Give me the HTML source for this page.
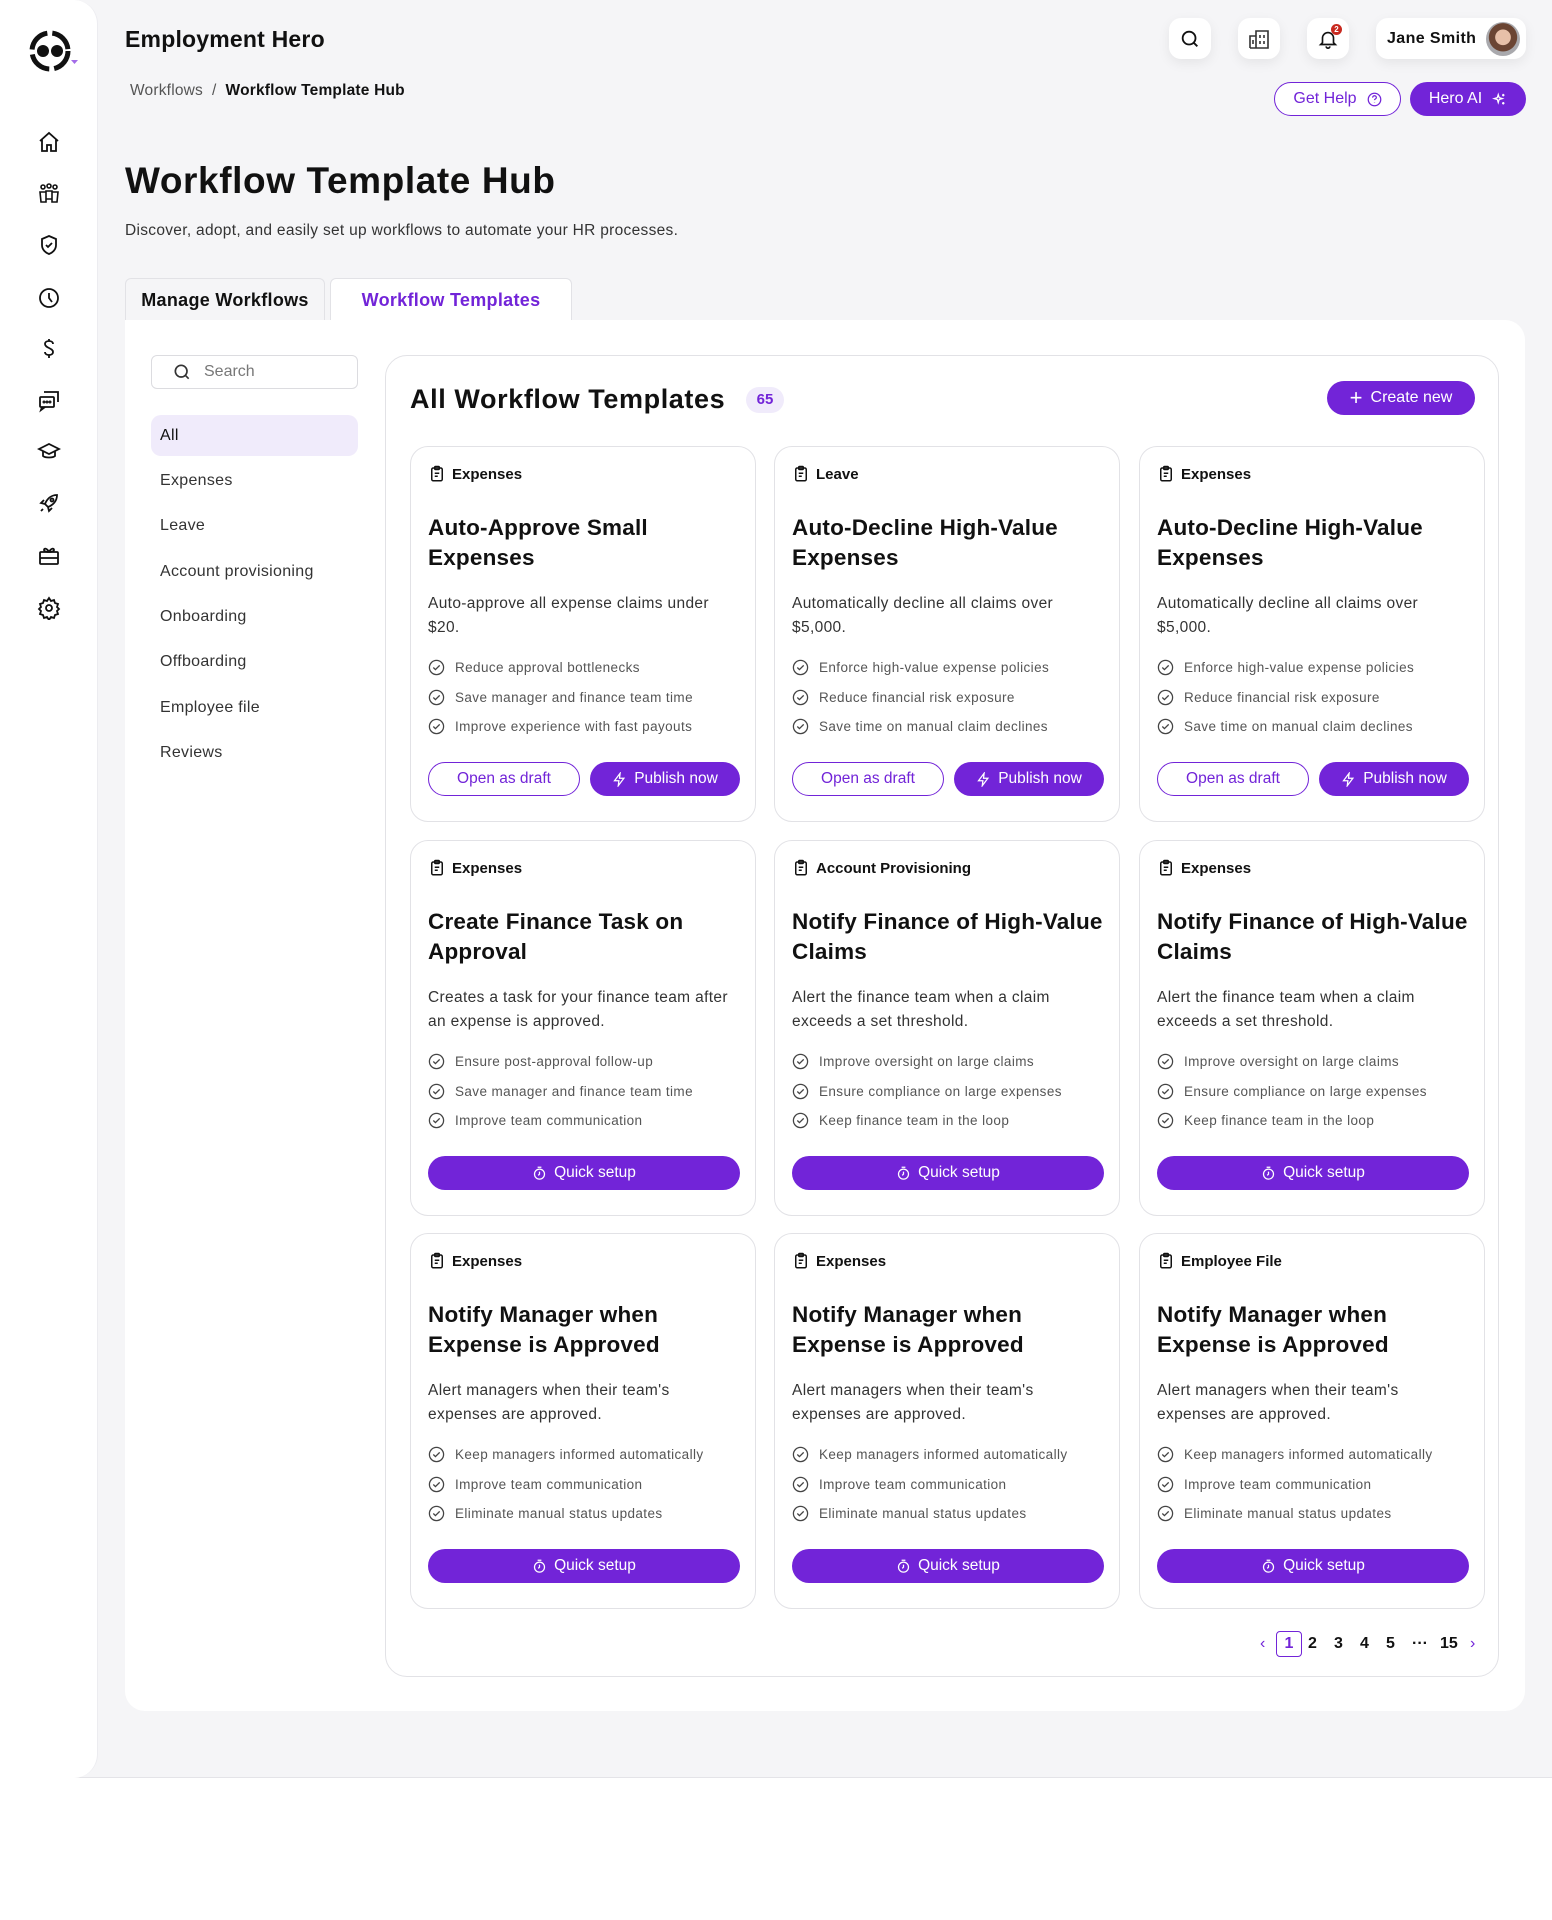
<!DOCTYPE html>
<html><head><meta charset="utf-8">
<style>
*{box-sizing:border-box;margin:0;padding:0}
body{width:1552px;height:1920px;background:#fff;font-family:"Liberation Sans",sans-serif;color:#111;position:relative;overflow:hidden}
.bg{position:absolute;left:0;top:0;width:1552px;height:1778px;background:#f5f5f7;border-bottom:1px solid #e4e4e8}
.side{position:absolute;left:0;top:0;width:98px;height:1778px;background:#fff;border-right:1px solid #ececf0;border-radius:0 24px 24px 0}
.ico{position:absolute;left:37px;width:24px;height:24px}
.abs{position:absolute}
.tb{position:absolute;top:18px;height:41px;background:#fff;border-radius:12px;box-shadow:0 4px 12px rgba(0,0,0,.07);display:flex;align-items:center;justify-content:center}
.pill{position:absolute;top:82px;height:34px;border-radius:17px;display:flex;align-items:center;justify-content:center;font-size:16px;gap:10px}
.purple{background:#7224d8;color:#fff}
.outline{border:1.5px solid #7224d8;color:#7224d8;background:#fff}
.tab{position:absolute;top:278px;height:43px;border:1px solid #e2e2e6;border-bottom:none;border-radius:6px 6px 0 0;display:flex;align-items:center;justify-content:center;font-size:18px;font-weight:bold;letter-spacing:.3px}
.panel{position:absolute;left:125px;top:320px;width:1400px;height:1391px;background:#fff;border-radius:0 20px 20px 20px}
.nav{position:absolute;left:151px;width:207px;height:41px;display:flex;align-items:center;padding-left:9px;font-size:16px;color:#333;letter-spacing:.3px}
.inner{position:absolute;left:385px;top:355px;width:1114px;height:1322px;border:1.5px solid #e2e2e6;border-radius:22px}
.card{position:absolute;width:346px;height:376px;border:1.5px solid #e2e2e6;border-radius:18px;background:#fff}
.cat{position:absolute;left:17px;top:18px;display:flex;align-items:center;gap:6px;font-size:15px;font-weight:bold}
.ct{position:absolute;left:17px;top:66px;width:320px;font-size:22.5px;font-weight:bold;line-height:30px;letter-spacing:.2px}
.cd{position:absolute;left:17px;top:145px;width:310px;font-size:15.5px;line-height:23.5px;color:#333;letter-spacing:.35px}
.bl{position:absolute;left:17px;top:206px;font-size:13.5px;color:#555;letter-spacing:.4px}
.bl div{height:29.4px;display:flex;align-items:center;gap:10px}
.btns{position:absolute;left:17px;top:315px;width:312px;height:34px;display:flex;gap:10px}
.btns div{flex:1;border-radius:17px;display:flex;align-items:center;justify-content:center;font-size:15.5px;gap:7px}
</style></head><body>
<div class="bg"></div>
<div class="side">
<svg class="abs" style="left:28px;top:28px" width="52" height="48" viewBox="0 0 52 48"><circle cx="22" cy="23" r="18" fill="none" stroke="#111" stroke-width="5" stroke-dasharray="24 5"/><circle cx="15" cy="23" r="6" fill="#111"/><circle cx="29" cy="23" r="6" fill="#111"/><path d="M43 32l7 0-3.5 4z" fill="#a36ce8"/></svg>
<svg class="ico" style="top:130px" viewBox="0 0 24 24" fill="none" stroke="#111" stroke-width="1.8"><path d="M3 11L12 3l9 8M5 9v12h5v-6h4v6h5V9"/></svg>
<svg class="ico" style="top:182px" viewBox="0 0 24 24" fill="none" stroke="#111" stroke-width="1.6"><circle cx="6" cy="5" r="2"/><circle cx="12" cy="4" r="2"/><circle cx="18" cy="5" r="2"/><path d="M3 10h6v10H4zM15 10h6l-1 10h-5zM9 9h6v8h-6z"/></svg>
<svg class="ico" style="top:233px" viewBox="0 0 24 24" fill="none" stroke="#111" stroke-width="1.8"><path d="M12 3l7 3v6c0 5-4 8-7 9-3-1-7-4-7-9V6z"/><path d="M9 12l2 2 4-4"/></svg>
<svg class="ico" style="top:286px" viewBox="0 0 24 24" fill="none" stroke="#111" stroke-width="1.8"><circle cx="12" cy="12" r="9"/><path d="M12 7v5l3 4"/></svg>
<svg class="ico" style="top:337px" viewBox="0 0 24 24" fill="none" stroke="#111" stroke-width="1.8"><path d="M16 7c0-2-2-3-4-3s-4 1-4 3 2 3 4 4 4 2 4 4-2 3-4 3-4-1-4-3M12 2v2M12 18v3"/></svg>
<svg class="ico" style="top:389px" viewBox="0 0 24 24" fill="none" stroke="#111" stroke-width="1.8"><rect x="3" y="8" width="14" height="10" rx="1"/><path d="M7 3h14v10M5 18l-1 3 4-3"/><circle cx="7" cy="13" r=".6"/><circle cx="10" cy="13" r=".6"/><circle cx="13" cy="13" r=".6"/></svg>
<svg class="ico" style="top:440px" viewBox="0 0 24 24" fill="none" stroke="#111" stroke-width="1.8"><path d="M2 9l10-5 10 5-10 5zM6 11v5c2 2 10 2 12 0v-5"/></svg>
<svg class="ico" style="top:491px" viewBox="0 0 24 24" fill="none" stroke="#111" stroke-width="1.8"><path d="M20 4c-6 0-10 4-12 9l3 3c5-2 9-6 9-12zM8 13l-4-1 3-3M11 16l1 4 3-3M6 18l-2 2"/><circle cx="15" cy="9" r="1.5"/></svg>
<svg class="ico" style="top:544px" viewBox="0 0 24 24" fill="none" stroke="#111" stroke-width="1.8"><rect x="3" y="8" width="18" height="12" rx="1"/><path d="M3 14h18M12 8c-2-4-5-4-5-2s5 2 5 2c0 0 5 0 5-2s-3-2-5 2"/></svg>
<svg class="ico" style="top:596px" viewBox="0 0 24 24" fill="none" stroke="#111" stroke-width="1.8"><circle cx="12" cy="12" r="3"/><path d="M12 2l2 3 3-1 1 3 3 1-1 3 2 2-2 2 1 3-3 1-1 3-3-1-2 3-2-3-3 1-1-3-3-1 1-3-2-2 2-2-1-3 3-1 1-3 3 1z"/></svg>
</div>

<div class="abs" style="left:125px;top:26px;font-size:23px;font-weight:bold;letter-spacing:.2px">Employment Hero</div>
<div class="abs" style="left:130px;top:82px;font-size:15.5px;color:#555;letter-spacing:.2px">Workflows &nbsp;/&nbsp; <span style="color:#111;font-weight:bold">Workflow Template Hub</span></div>

<div class="tb" style="left:1169px;width:42px"><svg width="22" height="22" viewBox="0 0 24 24" fill="none" stroke="#111" stroke-width="2"><circle cx="11" cy="11" r="7"/><path d="M16 16l4 4"/></svg></div>
<div class="tb" style="left:1238px;width:42px"><svg width="24" height="24" viewBox="0 0 24 24" fill="none" stroke="#333" stroke-width="1.6"><path d="M3 21V9h6v12M9 21V4h12v17zM3 21h18M13 8v3M17 8v3M13 14v3M17 14v3M6 13v4"/></svg></div>
<div class="tb" style="left:1307px;width:42px"><svg width="22" height="22" viewBox="0 0 24 24" fill="none" stroke="#111" stroke-width="1.8"><path d="M6 16V11a6 6 0 0112 0v5l2 2H4zM10 20a2 2 0 004 0"/></svg><div class="abs" style="right:7px;top:6px;width:11px;height:11px;border-radius:50%;background:#c8291f;color:#fff;font-size:8px;text-align:center;line-height:11px;font-weight:bold">2</div></div>
<div class="tb" style="left:1376px;width:150px;justify-content:flex-start;padding-left:11px;gap:10px"><span style="font-size:16px;font-weight:bold;letter-spacing:.4px">Jane Smith</span><div style="width:34px;height:34px;border-radius:50%;background:radial-gradient(circle at 50% 45%,#e7c0a8 0 30%,#6b4533 32% 55%,#a9a9ad 57%)"></div></div>

<div class="pill outline" style="left:1274px;width:127px">Get Help <svg width="15" height="15" viewBox="0 0 24 24" fill="none" stroke="#7224d8" stroke-width="2"><circle cx="12" cy="12" r="10"/><path d="M9 9a3 3 0 116 0c0 2-3 2-3 4M12 17v.5"/></svg></div>
<div class="pill purple" style="left:1410px;width:116px">Hero AI <svg width="15" height="15" viewBox="0 0 24 24" fill="none" stroke="#fff" stroke-width="2"><path d="M10 4l1.5 5 5 1.5-5 1.5L10 17l-1.5-5-5-1.5 5-1.5zM18 3v4M16 5h4M18 16v4M16 18h4"/></svg></div>

<div class="abs" style="left:125px;top:160px;font-size:37px;font-weight:bold;letter-spacing:.6px">Workflow Template Hub</div>
<div class="abs" style="left:125px;top:222px;font-size:15.5px;color:#333;letter-spacing:.3px">Discover, adopt, and easily set up workflows to automate your HR processes.</div>

<div class="tab" style="left:125px;width:200px;background:#f5f5f7">Manage Workflows</div>
<div class="tab" style="left:330px;width:242px;background:#fff;color:#7224d8">Workflow Templates</div>

<div class="panel"></div>
<div class="abs" style="left:151px;top:355px;width:207px;height:34px;border:1.5px solid #dcdce0;border-radius:6px;display:flex;align-items:center;padding-left:20px;gap:12px;font-size:16px;color:#777"><svg width="20" height="20" viewBox="0 0 24 24" fill="none" stroke="#333" stroke-width="2"><circle cx="11" cy="11" r="7"/><path d="M16 16l4 4"/></svg>Search</div>
<div class="nav" style="top:415px;background:#f0ebfb;border-radius:10px;color:#111">All</div>
<div class="nav" style="top:460px">Expenses</div>
<div class="nav" style="top:505px">Leave</div>
<div class="nav" style="top:551px">Account provisioning</div>
<div class="nav" style="top:596px">Onboarding</div>
<div class="nav" style="top:641px">Offboarding</div>
<div class="nav" style="top:687px">Employee file</div>
<div class="nav" style="top:732px">Reviews</div>

<div class="inner"></div>
<div class="abs" style="left:410px;top:384px;font-size:27px;font-weight:bold;letter-spacing:.6px">All Workflow Templates</div>
<div class="abs" style="left:746px;top:387px;width:38px;height:26px;border-radius:13px;background:#f0ebfb;color:#7224d8;font-size:15px;font-weight:bold;text-align:center;line-height:26px">65</div>
<div class="pill purple" style="left:1327px;top:381px;width:148px;gap:8px"><span style="font-size:22px;line-height:16px">+</span>Create new</div>

<div id="cards"></div>

<div class="abs" style="left:1260px;top:1631px;display:flex;align-items:center;font-size:16px;font-weight:bold;gap:0">
<span style="color:#7224d8;width:16px;font-weight:normal">&lsaquo;</span>
<span style="width:26px;height:26px;border:1.5px solid #7224d8;border-radius:4px;color:#7224d8;text-align:center;line-height:23px;margin-right:6px">1</span>
<span style="width:26px">2</span><span style="width:26px">3</span><span style="width:26px">4</span><span style="width:26px">5</span><span style="width:28px">···</span><span style="width:30px">15</span><span style="color:#7224d8;font-weight:normal">&rsaquo;</span>
</div>

<script>
const clip='<svg width="18" height="18" viewBox="0 0 24 24" fill="none" stroke="#111" stroke-width="2"><rect x="5" y="4" width="14" height="17" rx="2"/><rect x="9" y="2" width="6" height="4" rx="1"/><path d="M9 11h6M9 15h4"/></svg>';
const chk='<svg width="17" height="17" viewBox="0 0 24 24" fill="none" stroke="#444" stroke-width="1.8"><circle cx="12" cy="12" r="10"/><path d="M7.5 12l3 3 6-6"/></svg>';
const bolt='<svg width="15" height="15" viewBox="0 0 24 24" fill="none" stroke="#fff" stroke-width="2"><path d="M13 2L4 14h7l-1 8 9-12h-7z"/></svg>';
const timer='<svg width="15" height="15" viewBox="0 0 24 24" fill="none" stroke="#fff" stroke-width="2"><circle cx="12" cy="13" r="8"/><path d="M12 9v4l-2 2M9 2h6"/></svg>';
const D=[
["Expenses","Auto-Approve Small Expenses","Auto-approve all expense claims under<br>$20.",["Reduce approval bottlenecks","Save manager and finance team time","Improve experience with fast payouts"],1],
["Leave","Auto-Decline High-Value Expenses","Automatically decline all claims over<br>$5,000.",["Enforce high-value expense policies","Reduce financial risk exposure","Save time on manual claim declines"],1],
["Expenses","Auto-Decline High-Value Expenses","Automatically decline all claims over<br>$5,000.",["Enforce high-value expense policies","Reduce financial risk exposure","Save time on manual claim declines"],1],
["Expenses","Create Finance Task on Approval","Creates a task for your finance team after<br>an expense is approved.",["Ensure post-approval follow-up","Save manager and finance team time","Improve team communication"],0],
["Account Provisioning","Notify Finance of High-Value Claims","Alert the finance team when a claim<br>exceeds a set threshold.",["Improve oversight on large claims","Ensure compliance on large expenses","Keep finance team in the loop"],0],
["Expenses","Notify Finance of High-Value Claims","Alert the finance team when a claim<br>exceeds a set threshold.",["Improve oversight on large claims","Ensure compliance on large expenses","Keep finance team in the loop"],0],
["Expenses","Notify Manager when Expense is Approved","Alert managers when their team's<br>expenses are approved.",["Keep managers informed automatically","Improve team communication","Eliminate manual status updates"],0],
["Expenses","Notify Manager when Expense is Approved","Alert managers when their team's<br>expenses are approved.",["Keep managers informed automatically","Improve team communication","Eliminate manual status updates"],0],
["Employee File","Notify Manager when Expense is Approved","Alert managers when their team's<br>expenses are approved.",["Keep managers informed automatically","Improve team communication","Eliminate manual status updates"],0]];
const X=[410,774,1139],Y=[446,840,1233];let h='';
D.forEach((d,i)=>{
const b=d[4]?'<div class="outline">Open as draft</div><div class="purple">'+bolt+'Publish now</div>':'<div class="purple">'+timer+'Quick setup</div>';
h+=`<div class="card" style="left:${X[i%3]}px;top:${Y[Math.floor(i/3)]}px"><div class="cat">${clip}${d[0]}</div><div class="ct">${d[1]}</div><div class="cd">${d[2]}</div><div class="bl">${d[3].map(t=>'<div>'+chk+t+'</div>').join('')}</div><div class="btns">${b}</div></div>`;});
document.getElementById('cards').innerHTML=h;
</script>
</body></html>
